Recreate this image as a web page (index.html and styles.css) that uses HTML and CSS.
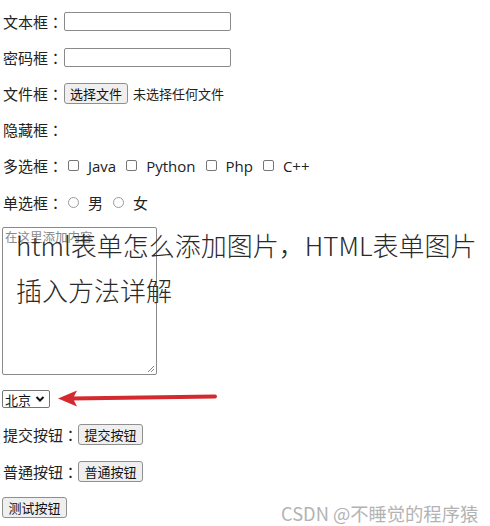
FILE: index.html
```html
<!DOCTYPE html>
<html lang="zh-CN">
<head>
<meta charset="utf-8">
<title>表单</title>
<link rel="stylesheet" href="styles.css">
</head>
<body>
<form class="form">
  <div class="row"><span class="label" lang="zh-TW">文本框：</span><input class="text" type="text"></div>
  <div class="row"><span class="label" lang="zh-TW">密码框：</span><input class="text" type="password"></div>
  <div class="row"><span class="label" lang="zh-TW">文件框：</span><span class="btn file-btn">选择文件</span><span class="file-note">未选择任何文件</span></div>
  <div class="row"><span class="label" lang="zh-TW">隐藏框：</span></div>
  <div class="row">
    <span class="label" lang="zh-TW">多选框：</span>
    <span class="opt"><span class="box"></span>Java</span>
    <span class="opt"><span class="box"></span>Python</span>
    <span class="opt"><span class="box"></span>Php</span>
    <span class="opt"><span class="box"></span>C++</span>
  </div>
  <div class="row">
    <span class="label" lang="zh-TW">单选框：</span>
    <span class="opt"><span class="radio"></span>男</span>
    <span class="opt"><span class="radio"></span>女</span>
  </div>
  <div class="area"><span class="placeholder">在这里添加内容</span><svg class="grip" width="9" height="9" viewBox="0 0 9 9"><path d="M8 2 L2 8 M8 5 L5 8" stroke="#888" stroke-width="1"/></svg></div>
  <div class="select-row">
    <span class="select">北京<svg width="10" height="8" viewBox="0 0 10 8"><path d="M1.5 2 L5 5.5 L8.5 2" fill="none" stroke="#111" stroke-width="2"/></svg></span>
  </div>
  <div class="row btn-row"><span class="label" lang="zh-TW">提交按钮：</span><span class="btn">提交按钮</span></div>
  <div class="row btn-row"><span class="label" lang="zh-TW">普通按钮：</span><span class="btn">普通按钮</span></div>
  <div class="row btn-row"><span class="btn first">测试按钮</span></div>
</form>
<svg class="arrow" width="170" height="20" viewBox="0 0 170 20"><path d="M14 9.5 L158 7.5" stroke="#d42a2f" stroke-width="4" stroke-linecap="round"/><path d="M1 9.5 L20 1.5 L16 9.5 L20 17.5 Z" fill="#d42a2f"/></svg>
<div class="title">html表单怎么添加图片，HTML表单图片<br>插入方法详解</div>
<div class="mark">CSDN @不睡觉的程序猿</div>
</body>
</html>
```
FILE: styles.css
```css
html, body {
  margin: 0;
  padding: 0;
  background: #fff;
}
body {
  position: relative;
  width: 490px;
  height: 526px;
  overflow: hidden;
  font-family: "Noto Sans CJK SC", "Noto Sans", sans-serif;
  color: #222;
}
.form {
  display: flex;
  flex-direction: column;
  padding: 3px 0 0 3px;
}
.row {
  display: flex;
  align-items: center;
  height: 36.2px;
  font-size: 15px;
  white-space: nowrap;
}
.label {
  width: 61px;
  font-family: "Noto Sans CJK TC", "Noto Sans CJK SC", sans-serif;
}
.btn-row {
  height: 36.5px;
}
.btn-row .label {
  width: 75px;
}
.text {
  width: 167px;
  height: 19px;
  box-sizing: border-box;
  border: 1px solid #8a8a8a;
  border-radius: 2px;
  padding: 0;
  margin: 0;
  background: #fff;
}
.btn {
  display: inline-flex;
  align-items: center;
  justify-content: center;
  box-sizing: border-box;
  width: 65px;
  height: 21px;
  border: 1px solid #8f8f8f;
  border-radius: 3px;
  background: #efefef;
  font-size: 13px;
  color: #111;
}
.btn.first {
  margin-left: -1px;
}
.file-btn {
  width: 64px;
}
.file-note {
  margin-left: 5px;
  font-size: 13px;
}
.opt {
  display: inline-flex;
  align-items: center;
  margin-right: 6px;
  font-family: "Open Sans", "Noto Sans CJK SC", sans-serif;
  font-size: 15px;
}
.box {
  width: 9px;
  height: 9px;
  border: 1px solid #767676;
  border-radius: 2px;
  margin: 0 9px 0 4px;
}
.radio {
  width: 9px;
  height: 9px;
  border: 1px solid #9a9a9a;
  border-radius: 50%;
  margin: 0 9px 0 4px;
}
.area {
  position: relative;
  box-sizing: border-box;
  width: 155px;
  height: 148px;
  margin: 7px 0 0 -1px;
  border: 1px solid #8a8a8a;
  border-radius: 2px;
}
.placeholder {
  display: block;
  padding: 1px 0 0 2px;
  font-size: 12.5px;
  line-height: 16px;
  color: #8a8a8a;
}
.grip {
  position: absolute;
  right: 1px;
  bottom: 1px;
}
.select-row {
  display: flex;
  margin: 15px 0 8.5px -1px;
}
.select {
  display: inline-flex;
  align-items: center;
  gap: 4px;
  box-sizing: border-box;
  width: 48px;
  height: 18px;
  padding: 0 2px;
  border: 1px solid #767676;
  border-radius: 2px;
  font-size: 13px;
  color: #111;
  white-space: nowrap;
}
.arrow {
  position: absolute;
  left: 57px;
  top: 389px;
}
.title {
  position: absolute;
  left: 16px;
  top: 222px;
  font-size: 26px;
  line-height: 45px;
  font-weight: 300;
  color: #2a2a2a;
  white-space: nowrap;
}
.mark {
  position: absolute;
  left: 281px;
  top: 501px;
  font-size: 18.3px;
  line-height: 24px;
  color: #b3b3b3;
  white-space: nowrap;
}
```
